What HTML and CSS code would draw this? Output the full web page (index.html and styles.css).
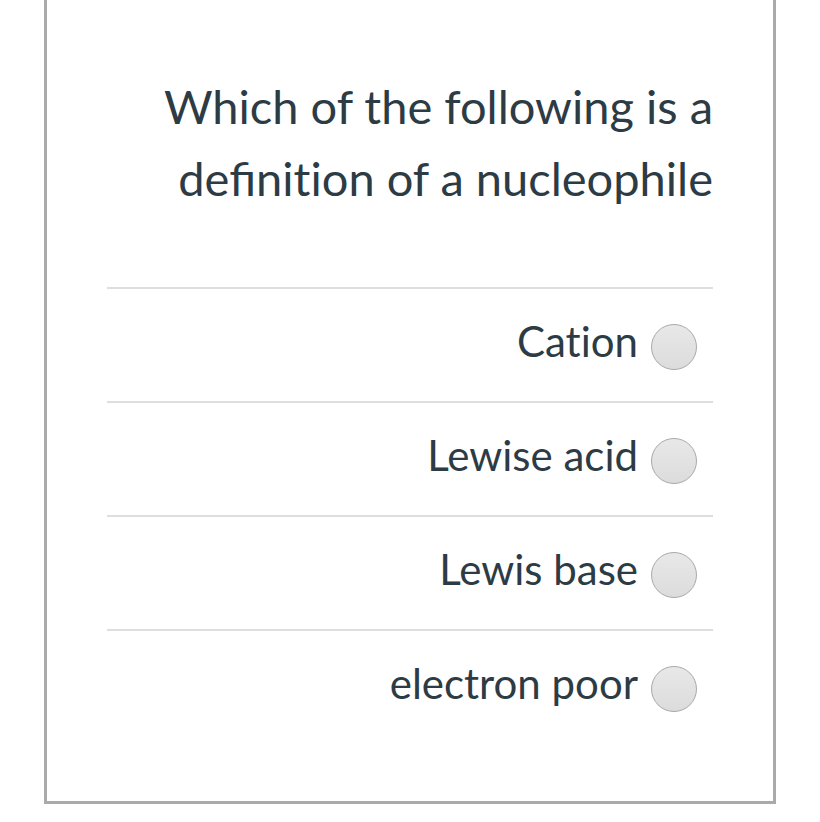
FILE: index.html
```html
<!DOCTYPE html>
<html>
<head>
<meta charset="utf-8">
<link rel="stylesheet" href="styles.css">
</head>
<body>
<div class="card">
  <div class="question">Which of the following is a<br>defi<span class="noliga">nition</span> of a nucleophile</div>
  <div class="options">
    <label class="option"><span class="label noliga">Cation</span><span class="radio"></span></label>
    <label class="option"><span class="label">Lewise acid</span><span class="radio"></span></label>
    <label class="option"><span class="label">Lewis base</span><span class="radio"></span></label>
    <label class="option"><span class="label">electron poor</span><span class="radio"></span></label>
  </div>
</div>
</body>
</html>
```
FILE: styles.css
```css
html, body {
  margin: 0;
  padding: 0;
  background: #fff;
}
body {
  font-family: Lato, "Open Sans", sans-serif;
  color: #2d3b45;
}
.noliga {
  font-feature-settings: "liga" 0;
}
.card {
  margin-left: 44px;
  width: 732px;
  height: 804px;
  box-sizing: border-box;
  border: 3px solid #aaaaaa;
  border-top: none;
  padding: 70px 60px 0 60px;
}
.question {
  font-size: 47px;
  line-height: 72px;
  text-align: right;
  margin-bottom: 73px;
}
.option {
  display: flex;
  align-items: center;
  justify-content: flex-end;
  gap: 13px;
  height: 112px;
  border-top: 2px solid #dedede;
  padding-right: 16px;
}
.label {
  font-size: 42px;
  line-height: 1;
  margin-bottom: 8px;
}
.radio {
  width: 44px;
  height: 44px;
  border-radius: 50%;
  border: 1px solid #a8a8a8;
  background: linear-gradient(#e8e8e8, #dcdcdc);
  flex: none;
  margin-top: 4px;
}
```
